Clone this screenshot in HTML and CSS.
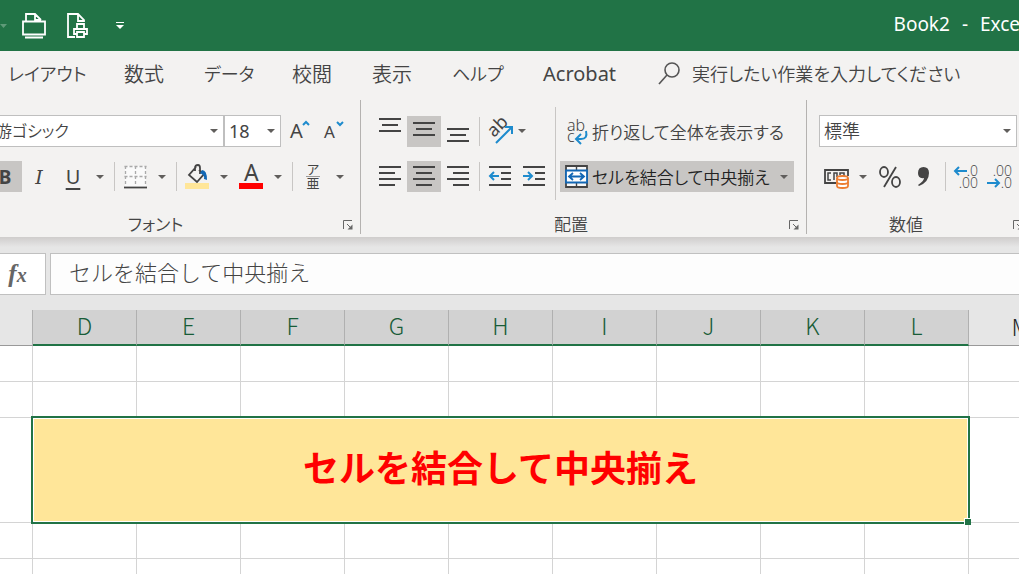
FILE: index.html
```html
<!DOCTYPE html>
<html lang="ja">
<head>
<meta charset="utf-8">
<meta name="viewport" content="width=device-width, initial-scale=1">
<title>Book2 - Excel</title>
<link rel="stylesheet" href="styles.css">
</head>
<body>
<svg class="defs" aria-hidden="true">
  <symbol id="arrow" viewBox="0 0 8 4"><path d="M0 0h8L4 4z" fill="#605e5c"/></symbol>
  <symbol id="launch" viewBox="0 0 10 10"><path d="M.5 9V.5H9M4 4l4 4" fill="none" stroke="#666"/><path d="M9.500 4.500v5h-5z" fill="#666"/></symbol>
</svg>
<div class="app">
  <header class="titlebar">
    <div class="quick">
      <button class="qbtn" aria-label="元に戻す"><svg width="7" height="4" viewBox="0 0 7 4"><path d="M0 0h7L3.500 4z" fill="#5f9b79"/></svg></button>
      <button class="qbtn open" aria-label="開く"><svg width="24" height="26" viewBox="0 0 24 26" fill="none" stroke="#fff" stroke-width="1.800"><path d="M4 8V1h9l6 6M13 1v6h6"/><path d="M1 8.500h22v13H1zM3 24.500h18"/></svg></button>
      <button class="qbtn" aria-label="印刷プレビュー"><svg width="22" height="25" viewBox="0 0 22 25" fill="none" stroke="#fff" stroke-width="1.800"><path d="M8 24H1V1h10l6 6v2M11 1v7h6"/><path d="M10 15v-4h7v4M10 21H7v-5h13v5h-3M10 19h7v5h-7z"/></svg></button>
      <button class="qbtn more" aria-label="クイック アクセスのカスタマイズ"><svg width="8" height="8" viewBox="0 0 8 8" fill="#fff"><path d="M0 0h8v1H0zM0 3h8L4 7z"/></svg></button>
    </div>
    <div class="title"><span>Book2</span><span>-</span><span>Excel</span></div>
  </header>

  <nav class="tabs">
    <button class="tab kana wide">レイアウト</button>
    <button class="tab">数式</button>
    <button class="tab kana mid">データ</button>
    <button class="tab">校閲</button>
    <button class="tab">表示</button>
    <button class="tab kana help">ヘルプ</button>
    <button class="tab latin">Acrobat</button>
    <button class="tab kana search"><svg width="22" height="23" viewBox="0 0 22 23" fill="none" stroke="#555" stroke-width="1.600"><circle cx="14" cy="8" r="7"/><path d="M9 13l-8 9"/></svg><span>実行したい作業を入力してください</span></button>
  </nav>

  <main class="ribbon">
    <section class="group font-group">
      <div class="body">
        <div class="rows">
          <div class="row">
            <label class="combo family"><select aria-label="フォント"><option>游ゴシック</option></select><svg class="arrow"><use href="#arrow"/></svg></label>
            <label class="combo size"><select aria-label="フォント サイズ"><option>18</option></select><svg class="arrow"><use href="#arrow"/></svg></label>
            <button class="btn" aria-label="フォント サイズの拡大"><svg class="glyph" width="20" height="22" viewBox="0 0 20 22"><text x="0" y="18" font-size="20">A</text><path d="M13 5l3-3 3 3"/></svg></button>
            <button class="btn" aria-label="フォント サイズの縮小"><svg class="glyph" width="20" height="22" viewBox="0 0 20 22"><text x="0" y="18" font-size="17">A</text><path d="M13 2l3 3 3-3"/></svg></button>
          </div>
          <div class="row low">
            <button class="btn on bold">B</button>
            <button class="btn italic">I</button>
            <button class="btn underline">U</button>
            <button class="drop" aria-label="下線の種類"><svg class="arrow"><use href="#arrow"/></svg></button>
            <i class="sep"></i>
            <button class="btn" aria-label="罫線"><svg width="23" height="24" viewBox="0 0 23 24" fill="none"><path d="M1 1h21v21H1z" fill="#fafafa"/><path d="M.5 1.500h22M.5 11.500h22" stroke="#aaa" stroke-width="1.300" stroke-dasharray="3 2"/><path d="M1.500 1v20M11.500 1v20M21.500 1v20" stroke="#aaa" stroke-width="1.300" stroke-dasharray="3 2"/><path d="M0 22.500h23" stroke="#444" stroke-width="1.800"/></svg></button>
            <button class="drop" aria-label="罫線の種類"><svg class="arrow"><use href="#arrow"/></svg></button>
            <i class="sep"></i>
            <button class="btn" aria-label="塗りつぶしの色"><svg width="24" height="26" viewBox="0 0 24 26"><path d="M11 3l-7 8 8 7 7-8-5-4M10 7V4q0-3 3-3 2 0 2 3v6" fill="none" stroke="#444" stroke-width="1.800"/><path d="M17 6q5 0 5 10l-3-1q1-4-4-6z" fill="#1267b4"/><path d="M0 19h24v6H0z" fill="#ffe699"/></svg></button>
            <button class="drop" aria-label="塗りつぶしの色の選択"><svg class="arrow"><use href="#arrow"/></svg></button>
            <button class="btn" aria-label="フォントの色"><svg class="glyph" width="24" height="26" viewBox="0 0 24 26"><text x="5" y="17" font-size="23">A</text><rect y="19" width="24" height="6" fill="#f00"/></svg></button>
            <button class="drop" aria-label="フォントの色の選択"><svg class="arrow"><use href="#arrow"/></svg></button>
            <i class="sep"></i>
            <button class="btn ruby" aria-label="ふりがな"><span>ア</span><span class="base">亜</span></button>
            <button class="drop" aria-label="ふりがなの設定"><svg class="arrow"><use href="#arrow"/></svg></button>
          </div>
        </div>
      </div>
      <footer class="caption"><span>フォント</span><button class="launch" aria-label="フォントの設定"><svg width="10" height="10"><use href="#launch"/></svg></button></footer>
    </section>

    <section class="group align-group">
      <div class="body">
        <div class="rows">
          <div class="row">
            <button class="btn" aria-label="上揃え"><svg class="lines" viewBox="0 3 22 24"><path d="M0 3h22M3 9h16M0 15h22"/></svg></button>
            <button class="btn on" aria-label="上下中央揃え"><svg class="lines" viewBox="0 3 22 24"><path d="M0 7h22M3 13h16M0 19h22"/></svg></button>
            <button class="btn" aria-label="下揃え"><svg class="lines" viewBox="0 3 22 24"><path d="M0 13h22M3 19h16M0 25h22"/></svg></button>
            <i class="sep"></i>
            <button class="btn" aria-label="方向"><svg class="glyph" width="26" height="26" viewBox="0 0 26 26"><text x="0" y="0" font-size="18" transform="translate(7 20) rotate(-45)">ab</text><path d="M9 25L24 10M18 9h7v7"/></svg></button>
            <button class="drop tight" aria-label="方向の選択"><svg class="arrow"><use href="#arrow"/></svg></button>
          </div>
          <div class="row low">
            <button class="btn" aria-label="左揃え"><svg class="lines" viewBox="0 2 22 24"><path d="M0 4h22M0 10h16M0 16h22M0 22h16"/></svg></button>
            <button class="btn on" aria-label="中央揃え"><svg class="lines" viewBox="0 2 22 24"><path d="M0 4h22M3 10h16M0 16h22M3 22h16"/></svg></button>
            <button class="btn" aria-label="右揃え"><svg class="lines" viewBox="0 2 22 24"><path d="M0 4h22M6 10h16M0 16h22M6 22h16"/></svg></button>
            <i class="sep"></i>
            <button class="btn" aria-label="インデントを減らす"><svg class="lines" viewBox="0 2 22 24"><path d="M0 4h22M12 10h10M12 16h10M0 22h22"/><path class="blue" d="M10 13H1M5 9l-4 4 4 4"/></svg></button>
            <button class="btn" aria-label="インデントを増やす"><svg class="lines" viewBox="0 2 22 24"><path d="M0 4h22M12 10h10M12 16h10M0 22h22"/><path class="blue" d="M0 13h9M5 9l4 4-4 4"/></svg></button>
          </div>
        </div>
        <i class="sep tall"></i>
        <div class="rows">
          <div class="row">
            <button class="textbtn wrap"><svg class="glyph" width="22" height="26" viewBox="0 0 22 26"><text x="1" y="13" font-size="16">ab</text><text x="1" y="24" font-size="16">c</text><path d="M20 13q2 8-5 8h-4M15 16l-5 5 5 5"/></svg><span>折り返して全体を表示する</span></button>
          </div>
          <div class="row low">
            <button class="textbtn merge on"><svg width="23" height="23" viewBox="0 0 23 23"><path d="M1 1h21v21H1z" fill="#f7f7f7" stroke="#444" stroke-width="1.800"/><path d="M11.500 1v4M11.500 18v4" stroke="#444" stroke-width="1.400"/><path d="M1 5.500h21v12H1z" fill="#fff" stroke="#1267b4" stroke-width="1.800"/><path d="M4 11.500h15M8 8l-4 3.500L8 15M15 8l4 3.500-4 3.500" fill="none" stroke="#1267b4" stroke-width="1.800"/></svg><span>セルを結合して中央揃え</span><svg class="arrow"><use href="#arrow"/></svg></button>
          </div>
        </div>
      </div>
      <footer class="caption"><span>配置</span><button class="launch" aria-label="配置の設定"><svg width="10" height="10"><use href="#launch"/></svg></button></footer>
    </section>

    <section class="group number-group">
      <div class="body">
        <div class="rows">
          <div class="row">
            <label class="combo format"><select aria-label="表示形式"><option>標準</option></select><svg class="arrow"><use href="#arrow"/></svg></label>
          </div>
          <div class="row low">
            <button class="btn" aria-label="通貨表示形式"><svg width="25" height="24" viewBox="0 0 25 24" fill="none" stroke="#444" stroke-width="1.800"><path d="M12 18H1V5h23v6"/><path d="M7 8H4v7h3M10 15V8h3v4M16 10V8h4v3" stroke-width="1.500"/><path d="M13 13v8q0 2 5.500 2t5.500-2v-8" fill="#fff" stroke="#ed7d31"/><ellipse cx="18.500" cy="13" rx="5.500" ry="2" fill="#fff" stroke="#ed7d31"/><path d="M13 17q0 2 5.500 2t5.500-2" stroke="#ed7d31"/></svg></button>
            <button class="drop" aria-label="通貨の選択"><svg class="arrow"><use href="#arrow"/></svg></button>
            <button class="btn" aria-label="パーセント スタイル"><svg width="24" height="24" viewBox="0 0 24 24" fill="none" stroke="#444" stroke-width="1.800"><ellipse cx="6" cy="7" rx="4" ry="5"/><ellipse cx="18" cy="17" rx="4" ry="5"/><path d="M18 2L6 22"/></svg></button>
            <button class="btn" aria-label="桁区切りスタイル"><svg width="14" height="20" viewBox="0 0 14 20"><path d="M6.500 0Q12 0 12 6q0 9-10 13l-1-1q6-4 6-7-6 1-6-5Q1 0 6.500 0z" fill="#444"/></svg></button>
            <i class="sep"></i>
            <button class="btn decimal" aria-label="小数点以下の表示桁数を増やす"><span><svg width="14" height="10" viewBox="0 0 14 10"><path d="M14 5H2M6 1L2 5l4 4"/></svg>.0</span><span>.00</span></button>
            <button class="btn decimal" aria-label="小数点以下の表示桁数を減らす"><span>.00</span><span><svg width="14" height="10" viewBox="0 0 14 10"><path d="M0 5h12M8 1l4 4-4 4"/></svg>.0</span></button>
          </div>
        </div>
      </div>
      <footer class="caption"><span>数値</span><button class="launch" aria-label="数値の設定"><svg width="10" height="10"><use href="#launch"/></svg></button></footer>
    </section>
  </main>

  <div class="formula-bar">
    <button class="fx" aria-label="関数の挿入"><i>f</i><i class="x">x</i></button>
    <input class="formula" aria-label="数式バー" value="セルを結合して中央揃え">
  </div>

  <div class="sheet">
    <table>
      <colgroup><col class="edge"><col span="10"></colgroup>
      <thead>
        <tr><th></th><th class="sel">D</th><th class="sel">E</th><th class="sel">F</th><th class="sel">G</th><th class="sel">H</th><th class="sel">I</th><th class="sel">J</th><th class="sel">K</th><th class="sel">L</th><th>M</th></tr>
      </thead>
      <tbody>
        <tr><td></td><td></td><td></td><td></td><td></td><td></td><td></td><td></td><td></td><td></td><td></td></tr>
        <tr><td></td><td></td><td></td><td></td><td></td><td></td><td></td><td></td><td></td><td></td><td></td></tr>
        <tr class="big"><td></td><td class="merged" colspan="9">セルを結合して中央揃え<div class="selection"><i class="handle"></i></div></td><td></td></tr>
        <tr><td></td><td></td><td></td><td></td><td></td><td></td><td></td><td></td><td></td><td></td><td></td></tr>
        <tr><td></td><td></td><td></td><td></td><td></td><td></td><td></td><td></td><td></td><td></td><td></td></tr>
      </tbody>
    </table>
  </div>
</div>
</body>
</html>
```
FILE: styles.css
```css
* { box-sizing: border-box; }
html, body { height: 100%; }
body {
  margin: 0;
  overflow: hidden;
  background: #fff;
  color: #444;
  font-family: "Noto Sans", "Noto Sans CJK JP", sans-serif;
}
button, select, input {
  margin: 0;
  padding: 0;
  border: 0;
  background: none;
  color: inherit;
  font: inherit;
}
svg { display: block; flex: none; }
.defs { position: absolute; width: 0; height: 0; }
.app { display: flex; flex-direction: column; min-height: 100%; overflow: hidden; }

.titlebar {
  display: flex;
  align-items: center;
  justify-content: space-between;
  height: 51px;
  background: #217346;
  color: #fff;
  overflow: hidden;
}
.quick { display: flex; align-items: center; gap: 21px; }
.qbtn.open { margin-left: -6px; }
.qbtn.more { margin-left: 6px; }
.title { display: flex; gap: 12px; margin-right: -6px; padding-bottom: 3px; font-size: 19px; white-space: nowrap; }

.tabs {
  display: flex;
  align-items: center;
  height: 47px;
  padding: 0 0 3px 8px;
  background: #f3f2f1;
  white-space: nowrap;
  font-size: 20px;
  font-feature-settings: "palt";
}
.tab { flex: none; width: 80px; text-align: left; font-weight: 350; }
.tab.kana { font-size: 18px; }
.tab.wide { width: 116px; }
.tab.mid { width: 88px; }
.tab.help { width: 91px; }
.tab.latin { width: 115px; font-size: 20px; font-weight: 400; }
.tab.search { display: flex; align-items: center; gap: 12px; width: auto; }

.ribbon {
  display: flex;
  height: 139px;
  padding-top: 2px;
  overflow: hidden;
  background: #f3f2f1;
  font-feature-settings: "palt";
}
.group {
  flex: none;
  display: flex;
  flex-direction: column;
  justify-content: space-between;
  height: 134px;
  padding: 15px 0 0 12px;
  border-right: 1px solid #b4b2b0;
}
.font-group { width: 385px; margin-left: -24px; }
.align-group { width: 446px; }
.number-group { width: 224px; }
.body { display: flex; }
.rows { display: flex; flex-direction: column; gap: 14px; }
.row { display: flex; align-items: center; height: 32px; }
.row.low { height: 31px; }
.btn {
  display: flex;
  align-items: center;
  justify-content: center;
  width: 34px;
  height: 31px;
}
.on { background: #c8c6c4; }
.drop { display: flex; align-items: center; justify-content: center; width: 20px; height: 31px; }
.drop.tight { width: 10px; }
.arrow { width: 8px; height: 4px; }
.sep { flex: none; width: 1px; height: 29px; margin: 0 3px 0 4px; background: #c8c6c4; }
.sep.tall { height: auto; margin: -8px 4px; }
.glyph { overflow: visible; }
.glyph text { fill: #444; }
.glyph path { fill: none; stroke: #1e8bcd; stroke-width: 2; }
.combo {
  display: flex;
  align-items: center;
  height: 32px;
  padding-right: 5px;
  border: 1px solid #bfbfbf;
  background: #fff;
  font-size: 18px;
}
.combo select { flex: 1; min-width: 0; appearance: none; outline: 0; font-weight: 350; font-feature-settings: "palt"; }
.family { width: 236px; padding-left: 7px; font-size: 16px; }
.size { width: 57px; padding-left: 4px; margin-right: 2px; }
.size select { font-weight: 400; }
.format { width: 198px; padding-left: 4px; }
.bold { font-size: 19px; font-weight: 700; }
.italic { font-family: "DejaVu Serif", serif; font-size: 19px; font-style: italic; }
.underline { font-size: 20px; text-decoration: underline; text-underline-offset: 4px; }
.ruby { flex-direction: column; font-size: 13px; line-height: 13px; }
.ruby .base { border-top: 1px solid #999; }
.lines { width: 22px; height: 24px; overflow: visible; fill: none; stroke: #444; stroke-width: 1.800; }
.lines .blue { stroke: #1e8bcd; stroke-width: 2; }
.textbtn {
  display: flex;
  align-items: center;
  gap: 4px;
  width: 234px;
  height: 31px;
  padding: 0 6px 0 5px;
  font-size: 17px;
  font-weight: 350;
  white-space: nowrap;
}
.merge { color: #222; }
.textbtn .arrow { margin-left: auto; }
.wrap { padding-left: 6px; }
.decimal { flex-direction: column; font-family: "Open Sans", sans-serif; font-size: 14px; font-weight: 300; line-height: 12px; }
.decimal span { display: flex; align-items: center; justify-content: flex-end; width: 24px; }
.decimal svg { fill: none; stroke: #1e8bcd; stroke-width: 2; }
.caption { display: flex; align-items: center; height: 18px; font-size: 17px; font-weight: 350; }
.caption span { flex: 1; padding-right: 20px; text-align: center; line-height: 18px; }
.launch { width: 17px; }

.formula-bar {
  display: flex;
  gap: 4px;
  height: 73px;
  padding: 16px 0 15px;
  background: linear-gradient(#cfcdcc, #e6e6e6 10px);
}
.fx {
  width: 46px;
  padding-right: 10px;
  border: 1px solid #c0c0c0;
  border-left: 0;
  background: #fff;
  color: #666;
  font-family: "Liberation Serif", serif;
  font-size: 25px;
  font-weight: 700;
}
.fx .x { font-size: 20px; }
.formula {
  flex: 1;
  min-width: 0;
  padding: 0 0 6px 18px;
  border: 1px solid #c0c0c0;
  border-right: 0;
  background: #fdfdfd;
  font-family: "Noto Sans CJK JP", sans-serif;
  font-size: 22px;
  font-weight: 300;
}

.sheet { flex: 1; overflow: hidden; font-family: "Noto Sans CJK JP", sans-serif; }
table { width: 1073px; table-layout: fixed; border-spacing: 0; }
col { width: 104px; }
.edge { width: 33px; }
th {
  height: 36px;
  padding: 0 0 4px;
  border-right: 1px solid #d0d0d0;
  border-bottom: 1px solid #999;
  background: #e6e6e6;
  color: #222;
  font-size: 23px;
  font-weight: 300;
  line-height: 30px;
}
th:first-child { border-right-color: #b0b0b0; }
th.sel { border-right-color: #b0b0b0; border-bottom: 2px solid #217346; background: #d2d2d2; color: #185c37; }
td { height: 36px; padding: 0; border-right: 1px solid #d4d4d4; border-bottom: 1px solid #d4d4d4; }
.big td { height: 105px; }
.merged {
  position: relative;
  background: #ffe699;
  color: #f00;
  font-size: 36px;
  font-weight: 700;
  line-height: 50px;
  text-align: center;
}
.big .merged { padding-bottom: 8px; }
.selection { position: absolute; inset: -2px; border: 2px solid #217346; box-shadow: inset 0 0 0 1px #fff; }
.handle {
  position: absolute;
  right: -3px;
  bottom: -3px;
  width: 7px;
  height: 7px;
  border: solid #fff;
  border-width: 1px 0 0 1px;
  background: #217346;
}
```
